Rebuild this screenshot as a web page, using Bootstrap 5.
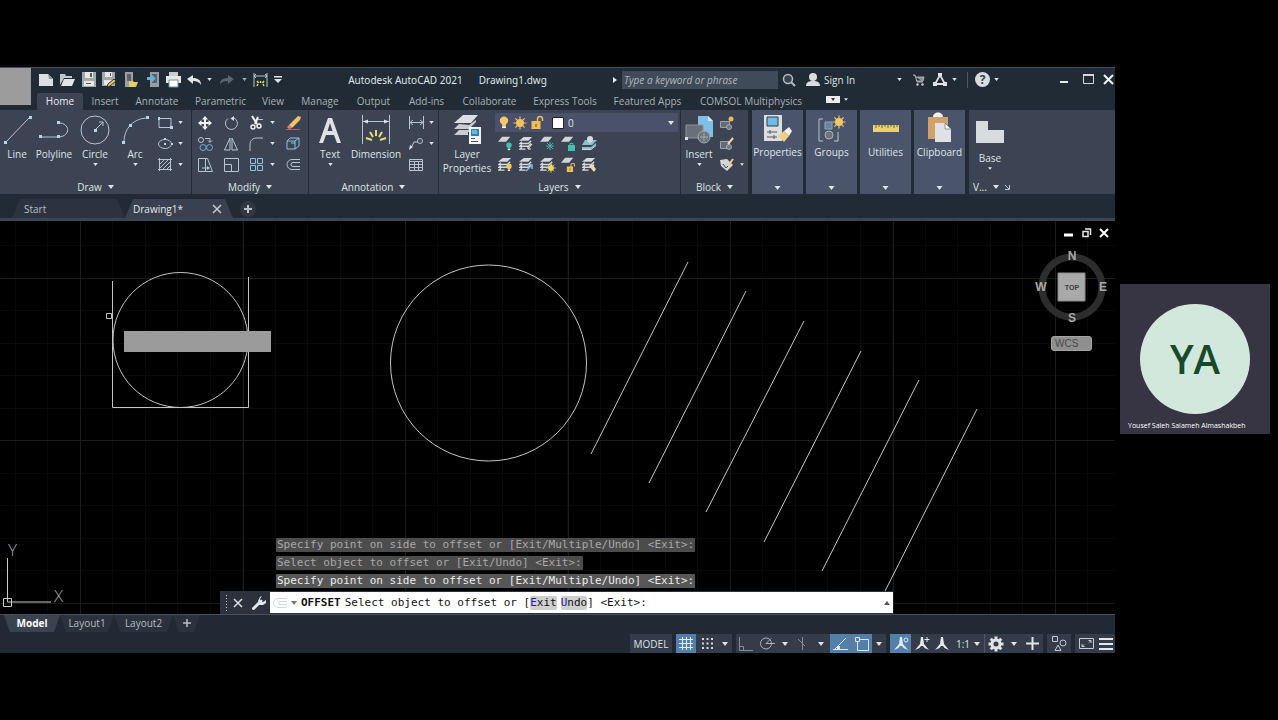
<!DOCTYPE html>
<html lang="en">
<head>
<meta charset="utf-8">
<meta name="viewport" content="width=device-width, initial-scale=1">
<title>Autodesk AutoCAD 2021 - Drawing1.dwg</title>
<link href="https://cdn.jsdelivr.net/npm/bootstrap@5.3.0/dist/css/bootstrap.min.css" rel="stylesheet">
<style>
:root{--bar:#202b35;--panel:#3c4352;--tile:#4a546b;--ink:#dfe4e8;--dim:#a9b0b6}
body{background:#000;color:var(--ink);font:10px/14px "Open Sans","Noto Sans",sans-serif}
button,input,select{font:inherit;color:inherit;background:none;border:0;padding:0;margin:0}
button{display:flex;align-items:center;justify-content:center;flex:none}
svg{display:block;flex:none;overflow:visible}
.stage{min-height:100vh}
.app{padding:67px 0;min-width:0}
.side{width:163px;padding:0 8px 3px 5px}
.ln{fill:none;stroke:#b4c6d2;stroke-width:1}
.titlebar{height:24px;background:var(--bar);border-top:1px solid #23566a;position:relative}
.titlebar .vr{height:16px;align-self:center}
.logo{width:31px;height:37px;background:#9c9c9c;position:absolute;left:0;top:0;z-index:2}
.quick{padding-left:36px}
.w9{width:9px}.w14{width:14px}.w18{width:18px}.w20{width:20px}.w21{width:21px}.w22{width:22px}.w24{width:24px}.w26{width:26px}
.caption-text{font-family:"Noto Sans","Open Sans",sans-serif}
.search{width:156px;height:18px;background:#404b58;padding:0 2px;font-style:italic;margin-left:3px}
.search::placeholder{color:#b0b7bd;opacity:1}
.signin{width:91px;padding-left:2px;gap:4px;justify-content:flex-start}
.tabs{height:19px;padding:2px 0 0 37px;background:var(--bar);display:grid;grid-template-columns:46px 44px 60px 67px 38px 56px 51px 55px 71px 80px 85px 122px 50px}
.tabs button{color:var(--dim);white-space:nowrap;padding-bottom:2px}
.tabs .on{background:var(--panel);color:#e8ecef;border-radius:2px 2px 0 0}
.ribbon{height:84px;background:var(--bar)}
.panel{background:var(--panel);border-right:1px solid #252d38;flex:none}
.panel-body{height:70px;padding-top:2px}
.panel-name{height:14px;gap:6px}
.big{flex-direction:column;justify-content:flex-start;height:68px}
.pic{height:35px;display:flex;align-items:center;justify-content:center}
.big .drop{margin-top:2px}
.base-view span+span{margin-top:2px}
.smalls{display:grid;grid-auto-rows:21px;align-content:start}
.smalls>div{display:flex;align-items:center}
.tile{background:var(--tile);width:51px;margin-left:3px;flex-direction:column;justify-content:flex-start}
.tile .drop{margin-top:auto;margin-bottom:4px}
.layer-combo{height:19px;background:#49526a;padding-left:4px;gap:4px;margin:1px 2px 1px 0}
.layer-combo select{appearance:none;outline:0;height:18px}
.filetabs{height:27px;background:var(--bar);border-bottom:3px solid #3b4553;padding:5px 0 0 12px}
.filetab{height:19px;background:#2b3340;color:#b6bdc3;clip-path:polygon(8px 0,calc(100% - 8px) 0,100% 100%,0 100%)}
.filetab.on{background:#394150;color:#e1e5e8}
.canvas{position:relative;background:#000;min-height:380px;overflow:hidden}
.canvas>.drawing{position:absolute;inset:0;width:100%;height:100%}
.redact{position:absolute;left:124px;top:110px;width:147px;height:21px;background:#9b9b9b}
.childwin{position:absolute;right:2px;top:3px}
.childwin button{width:18px;height:17px}
.cube{position:absolute;right:5px;top:28px}
.wcs{position:absolute;right:23px;top:115px;width:41px;height:15px;background:#8f8f8f;border:1px solid #a5a5a5;border-radius:3px;color:#4a4a4a;font:10px "Liberation Sans",Arial,sans-serif;justify-content:flex-start;padding-left:3px}
.command{position:absolute;left:220px;bottom:0;width:673px;max-width:100%;font:11px/14px "DejaVu Sans Mono","Liberation Mono",monospace}
.history{padding:0 0 3px 56px;gap:4px}
.history div{background:#4c4c4c;color:#a8a8a8;padding:0 1px;border-radius:1px;white-space:nowrap}
.history div:last-child{color:#ececec;background:#575757}
.cmdbar{height:23px;background:#2b313d}
.prompt{background:#fff;color:#111;height:21px;padding:0 3px;white-space:pre}
.prompt button{background:#cfcfcf;border-radius:2px;height:14px}
.prompt b.key{color:#2418b0;font-weight:400}
.layouts{height:20px;background:#212a34;border-top:1px solid #4a4f57;padding-left:4px}
.layouts button{height:17px;padding-bottom:1px;color:#b4bbc0;background:#2a323d;clip-path:polygon(0 0,100% 0,calc(100% - 6px) 100%,6px 100%)}
.layouts .on{background:#3b4350;color:#fff;font-weight:700}
.status{height:19px;background:#212a34}
.status button{height:19px;background:#343b49}
.status .lit{background:#5380aa}
.avatar-card{height:150px;background:#373544;position:relative}
.avatar{width:110px;height:110px;border-radius:50%;background:#d3e8dc;color:#174a2a;font:600 40px/109px "Open Sans",sans-serif;margin-top:20px}
.who{font-size:7px;line-height:10px;color:#fff;position:absolute;left:8px;bottom:3px;white-space:nowrap}
</style>
</head>
<body>
<svg width="0" height="0" class="position-absolute" aria-hidden="true">
  <symbol id="dn" viewBox="0 0 6 4"><path d="M0 0h6L3 4z" fill="#dfe4e8"/></symbol>
  <symbol id="stack" viewBox="0 0 16 16"><path d="M5 1h9l-4 4H0z" fill="#d5d9dc"/><path d="M3 6L1 8h9l3-3M3 9l-2 2h9l3-3M3 12l-2 2h6" fill="none" stroke="#d5d9dc" stroke-width="1.500"/></symbol>
  <symbol id="sheet" viewBox="0 0 16 16"><path d="M5 1h10l-5 6H0z" fill="#cfd4d8"/></symbol>
  <symbol id="bulb" viewBox="0 0 10 14"><circle cx="5" cy="5" r="4.500"/><path d="M3 8h4v3H3z"/><path d="M3 11h4v2H3z" fill="#fff"/></symbol>
  <symbol id="sun" viewBox="-8 -8 16 16"><circle r="4.500"/><path d="M0-7.500V7.500M-7.500 0H7.500M-5.300-5.300L5.300 5.300M5.300-5.300L-5.300 5.300" stroke="currentColor" stroke-width="1.300"/></symbol>
  <symbol id="lock" viewBox="0 0 12 13"><path d="M0 5h9v8H0z"/><path d="M6 6V3a2.500 2.500 0 0 1 5 0v2" fill="none" stroke="currentColor" stroke-width="1.500"/><path d="M4 8h1v3H4z" fill="#5a4a20"/></symbol>
  <symbol id="scale" viewBox="0 0 16 16"><path d="M7 1h2l1 7 5 6-4.500-2L9 10H7l-1.500 2L1 14l5-6z" fill="#e4e8ea"/></symbol>
</svg>

<div class="stage d-flex">
<main class="app flex-grow-1 d-flex flex-column">

  <header class="titlebar d-flex align-items-center">
    <div class="logo"></div>
    <nav class="quick d-flex" aria-label="Quick access">
      <button class="w21" aria-label="New"><svg width="15" height="13"><path d="M0 1h9l5 5v7H0z" fill="#dde0e2"/><path d="M9 1l5 5h-4z" fill="#8f979d"/></svg></button>
      <button class="w21" aria-label="Open"><svg width="15" height="13"><path d="M0 12V1h5l1 2h6v2H4z" fill="#c2c7cb"/><path d="M4 6h11l-3 7H1z" fill="#e2e5e7"/></svg></button>
      <button class="w21" aria-label="Save"><svg width="14" height="15"><path d="M0 0h14v15H0z" fill="#a3a9ad"/><path d="M3 0h8v6H3zM2 9h10v5H2z" fill="#e6e8ea"/><path d="M8 1h2v4H8zM4 11h5v1H4z" fill="#555d64"/></svg></button>
      <button class="w21" aria-label="Save as"><svg width="15" height="15"><path d="M0 0h13v14H0z" fill="#a3a9ad"/><path d="M3 0h7v5H3zM2 8h9v5H2z" fill="#e6e8ea"/><path d="M8 1h1v3H8z" fill="#555d64"/><path d="M6 12l6-5 2 2-6 5-3 1z" fill="#e6c65c" stroke="#333"/></svg></button>
      <button class="w22" aria-label="Open from web"><svg width="13" height="15"><path d="M0 0h8v15H0z" fill="#9aa1a6"/><path d="M2 2h4v7H2z" fill="#59616a"/><path d="M4 9h4l1 1h4l-2 5H4z" fill="#e3cf62"/></svg></button>
      <button class="w21" aria-label="Save to web"><svg width="12" height="15"><path d="M3 0h9v15H3z" fill="#969da3"/><path d="M5 2h5v9H5z" fill="#59616a"/><path d="M0 5h5V3l4 3.500L5 10V8H0z" fill="#62b3dc"/></svg></button>
      <button class="w21" aria-label="Plot"><svg width="15" height="15"><path d="M3 0h9v5H3z" fill="#c9cdd0"/><path d="M0 4h15v7H0z" fill="#e5e7e9"/><path d="M3 8h9v7H3z" fill="#fff" stroke="#6a8fa8"/></svg></button>
      <button class="w21" aria-label="Undo"><svg width="15" height="10"><path d="M0 4l6-4v3c5 0 8 2 8 7-2-3-4-4-8-4v3z" fill="#e2e5e7"/></svg></button>
      <button class="w9" aria-label="Undo list"><svg width="5" height="3"><use href="#dn"/></svg></button>
      <button class="w26" aria-label="Redo"><svg width="15" height="9"><path d="M14 4L8 0v3C3 3 0 5 0 9c2-2 4-3 8-3v3z" fill="#5a636b"/></svg></button>
      <button class="w9" aria-label="Redo list"><svg width="5" height="3"><use href="#dn" opacity=".7"/></svg></button>
      <button class="w22" aria-label="Dimension"><svg width="15" height="14"><path d="M1 0v14M14 0v14M1 3h13M3 1L1 3l2 2M12 1l2 2-2 2" class="ln"/><path d="M4 13l1-2M7.500 8v2M11 13l-1-2M4 8l1.500 2M11 8l-1.500 2" stroke="#e6dc62" stroke-width="1.500"/></svg></button>
      <button class="w14" aria-label="Customize"><svg width="8" height="7"><path d="M0 0h8v1.500H0zM0 3h8L4 7z" fill="#dfe4e8"/></svg></button>
    </nav>
    <div class="caption-text flex-grow-1 d-flex justify-content-center gap-3 text-nowrap"><span>Autodesk AutoCAD 2021</span><span>Drawing1.dwg</span></div>
    <button class="w9" aria-label="Toggle search"><svg width="4" height="6"><path d="M0 0l4 3-4 3z" fill="#e8eaec"/></svg></button>
    <input class="search" type="text" placeholder="Type a keyword or phrase" aria-label="Search">
    <button class="w22" aria-label="Find"><svg width="14" height="14"><circle cx="6" cy="6" r="4.500" fill="#37444f" stroke="#b5bcc1" stroke-width="1.500"/><path d="M9 9l4 4" stroke="#b5bcc1" stroke-width="2"/></svg></button>
    <button class="signin ms-1"><svg width="14" height="13"><circle cx="7" cy="4" r="4" fill="#d9dde0"/><path d="M0 13c0-4 3-5 7-5s7 1 7 5z" fill="#d9dde0"/></svg><span>Sign In</span></button>
    <button class="w9" aria-label="Account list"><svg width="5" height="3"><use href="#dn"/></svg></button>
    <button class="w22 ms-1" aria-label="Store"><svg width="12" height="12"><path d="M0 1h2l2 7h6M3 3h8l-1 4H4" fill="#8a9299" stroke="#aab1b7"/><circle cx="4.500" cy="10.500" r="1.200" fill="#c9ced2"/><circle cx="9.500" cy="10.500" r="1.200" fill="#c9ced2"/></svg></button>
    <button class="w20" aria-label="Autodesk app store"><svg width="14" height="13"><path d="M7 2l5 9H2z" fill="none" stroke="#dfe3e6" stroke-width="1.800"/><path d="M5 0h4v3H5zM0 9h4v4H0zM10 9h4v4h-4z" fill="#dfe3e6"/></svg></button>
    <button class="w9" aria-label="Apps list"><svg width="5" height="3"><use href="#dn"/></svg></button>
    <div class="vr ms-2 me-1"></div>
    <button class="w20" aria-label="Help"><svg width="15" height="15"><circle cx="7.500" cy="7.500" r="7.500" fill="#d8dcdf"/><text x="7.500" y="12" text-anchor="middle" font-size="12" font-weight="700" fill="#36424d">?</text></svg></button>
    <button class="w9" aria-label="Help list"><svg width="5" height="3"><use href="#dn"/></svg></button>
    <div class="d-flex ms-5 ps-1">
      <button class="w22" aria-label="Minimize"><svg width="8" height="9"><path d="M0 7h8" stroke="#e8eaec" stroke-width="2"/></svg></button>
      <button class="w26" aria-label="Maximize"><svg width="11" height="11"><path d="M.5.5h10v9H.5z" fill="none" stroke="#d4d8db"/><path d="M0 1h11" stroke="#d4d8db" stroke-width="2"/></svg></button>
      <button class="w14" aria-label="Close"><svg width="9" height="9"><path d="M0 0l9 9M9 0L0 9" stroke="#f0f2f3" stroke-width="2"/></svg></button>
    </div>
  </header>

  <nav class="tabs" aria-label="Ribbon tabs">
    <button class="on">Home</button><button>Insert</button><button>Annotate</button><button>Parametric</button><button>View</button><button>Manage</button><button>Output</button><button>Add-ins</button><button>Collaborate</button><button>Express Tools</button><button>Featured Apps</button><button>COMSOL Multiphysics</button>
    <button class="gap-1 pb-1" aria-label="Ribbon display"><svg width="14" height="7"><path d="M0 0h14v7H0z" fill="#eceeef"/><path d="M5 2h4L7 5z" fill="#333"/></svg><svg width="4" height="3"><use href="#dn"/></svg></button>
  </nav>

  <div class="ribbon d-flex">
    <section class="panel">
      <div class="panel-body d-flex">
        <button class="big" style="width:34px"><span class="pic"><svg width="30" height="28"><path d="M3 27L28 1" class="ln"/><path d="M2 25h3v3H2zM27 0h3v3h-3z" fill="#b9d4e4"/></svg></span><span>Line</span></button>
        <button class="big" style="width:40px"><span class="pic"><svg width="30" height="18"><path d="M1 16h19c12-1 11-14 0-14" class="ln"/><path d="M0 14h3v3H0zM18 14h3v3h-3zM18 0h3v3h-3z" fill="#b9d4e4"/></svg></span><span>Polyline</span></button>
        <button class="big" style="width:42px"><span class="pic"><svg width="30" height="30"><circle cx="15" cy="15" r="14" class="ln"/><path d="M15 15l8-8M19 7h4v4" class="ln"/><path d="M14 14h3v3h-3z" fill="#b9d4e4"/></svg></span><span>Circle</span><svg class="drop" width="5" height="3"><use href="#dn"/></svg></button>
        <button class="big" style="width:38px"><span class="pic"><svg width="27" height="28"><path d="M2 26C2 12 12 2 26 2" class="ln"/><path d="M0 25h3v3H0zM7 8h3v3H7zM24 0h3v3h-3z" fill="#b9d4e4"/></svg></span><span>Arc</span><svg class="drop" width="5" height="3"><use href="#dn"/></svg></button>
        <div class="smalls" style="width:37px">
          <div><button class="w22" aria-label="Rectangle"><svg width="15" height="12"><path d="M1 1.500h12v9H1z" class="ln"/><path d="M0 0h2v3H0zM12 9h3v3h-3z" fill="#b9d4e4"/></svg></button><button class="w9" aria-label="More"><svg width="5" height="3"><use href="#dn"/></svg></button></div>
          <div><button class="w22" aria-label="Ellipse"><svg width="15" height="12"><ellipse cx="7" cy="6" rx="6.500" ry="4.500" class="ln"/><path d="M6 5h2v2H6zM6 0h2v2H6zM13 5h2v2h-2z" fill="#b9d4e4"/></svg></button><button class="w9" aria-label="More"><svg width="5" height="3"><use href="#dn"/></svg></button></div>
          <div><button class="w22" aria-label="Hatch"><svg width="14" height="13"><path d="M0 1.500h14M0 11.500h14M1.500 0v13M12.500 0v13M2 6l4-4M2 10l8-8M5 11l7-7M9 11l3-3" class="ln"/></svg></button><button class="w9" aria-label="More"><svg width="5" height="3"><use href="#dn"/></svg></button></div>
        </div>
      </div>
      <div class="panel-name d-flex justify-content-center align-items-center">Draw <svg width="6" height="4"><use href="#dn"/></svg></div>
    </section>

    <section class="panel">
      <div class="panel-body smalls" style="grid-template-columns:26px 26px 36px 28px">
        <div><button class="mx-auto" aria-label="Move"><svg width="14" height="14"><path d="M7 0l3 3.500H8V6h2.500V4L14 7l-3.500 3V8H8v2.500h2L7 14l-3-3.500h2V8H3.500v2L0 7l3.500-3v2H6V3.500H4z" fill="#f0f3f5"/></svg></button></div>
        <div><button class="mx-auto" aria-label="Rotate"><svg width="14" height="14"><path d="M10 2A6 6 0 1 1 4 2.500" class="ln"/><path d="M10 0v5L6.500 2.500z" fill="#d5e0e8"/></svg></button></div>
        <div><button class="w24" aria-label="Trim"><svg width="13" height="14"><path d="M2 0l5 8M8 1L5 8" stroke="#f0f3f5" stroke-width="2"/><circle cx="3" cy="11" r="2" fill="none" stroke="#f0f3f5" stroke-width="1.500"/><circle cx="9" cy="10" r="2" fill="none" stroke="#f0f3f5" stroke-width="1.500"/><path d="M8 3.500h5" class="ln"/></svg></button><button class="w9" aria-label="More"><svg width="5" height="3"><use href="#dn"/></svg></button></div>
        <div><button class="w26" aria-label="Erase"><svg width="15" height="14"><path d="M3 9l9-9 3 1-1 3-8 8z" fill="#eec36a"/><path d="M3 9l3 3-3 1-2-2z" fill="#e27f86"/><path d="M0 13.500h14" stroke="#b05f6b"/></svg></button></div>
        <div><button class="mx-auto" aria-label="Copy"><svg width="15" height="14"><circle cx="3" cy="3" r="2.500" class="ln"/><circle cx="5" cy="10.500" r="3" class="ln" style="stroke:#6fb0da"/><circle cx="11.500" cy="10.500" r="3" class="ln" style="stroke:#6fb0da"/><path d="M7 1.500h5V5M10 3.500l2 2 2-2" class="ln"/></svg></button></div>
        <div><button class="mx-auto" aria-label="Mirror"><svg width="14" height="14"><path d="M6 1v12H.5zM8 1v12h5.500z" class="ln"/></svg></button></div>
        <div><button class="w24" aria-label="Fillet"><svg width="14" height="14"><path d="M1 14V8c0-5 3-7 7-7h6" class="ln"/></svg></button><button class="w9" aria-label="More"><svg width="5" height="3"><use href="#dn"/></svg></button></div>
        <div><button class="w26" aria-label="Explode"><svg width="14" height="13"><path d="M1 4h8v8H1zM1 4l3-3h9v8l-4 3M9 4l4-3M5 6h4" class="ln" style="stroke:#8fc0de"/></svg></button></div>
        <div><button class="mx-auto" aria-label="Stretch"><svg width="15" height="14"><path d="M.5.5h7v13h-7zM7.500.5h2l5 13h-7M4 10h6" class="ln"/><path d="M9 8l3 2-3 2z" fill="#b4c6d2"/></svg></button></div>
        <div><button class="mx-auto" aria-label="Scale"><svg width="15" height="14"><path d="M.5.500h14v13H.5zM.5 6.500h7v7" class="ln"/></svg></button></div>
        <div><button class="w24" aria-label="Array"><svg width="13" height="13"><path d="M.5.5h5v5h-5zM7.500.5h5v5h-5zM.5 7.500h5v5h-5zM7.500 7.500h5v5h-5z" class="ln" style="stroke:#8fc0de"/></svg></button><button class="w9" aria-label="More"><svg width="5" height="3"><use href="#dn"/></svg></button></div>
        <div><button class="w26" aria-label="Offset"><svg width="14" height="11"><path d="M14 .5H6a5 5 0 0 0 0 10h8M14 3.500H7a2 2 0 0 0 0 4h7" class="ln"/></svg></button></div>
      </div>
      <div class="panel-name d-flex justify-content-center align-items-center">Modify <svg width="6" height="4"><use href="#dn"/></svg></div>
    </section>

    <section class="panel">
      <div class="panel-body d-flex ps-1">
        <button class="big" style="width:34px"><span class="pic"><svg width="24" height="26"><path d="M1 26L10 1h4l9 25h-4l-3-8H8l-3 8zM9.500 14h5L12 6z" fill="#dfe2e4" fill-rule="evenodd"/></svg></span><span>Text</span><svg class="drop" width="5" height="3"><use href="#dn"/></svg></button>
        <button class="big" style="width:58px"><span class="pic"><svg width="28" height="29"><path d="M.5 0v29M27.500 0v29M1 6.500h26" class="ln"/><path d="M1 6.500l5-2v4zM27 6.500l-5-2v4z" fill="#dbe3e8"/><path d="M14 15v6M8 17l3 5M20 17l-3 5M4 23l6 2M24 23l-6 2" stroke="#e8df72" stroke-width="2"/></svg></span><span>Dimension</span></button>
        <div class="smalls" style="width:33px">
          <div><button class="w22" aria-label="Linear"><svg width="15" height="13"><path d="M.5 0v13M14.500 0v13M1 6.500h13M4 4L1 6.500 4 9M11 4l3 2.500L11 9" class="ln"/></svg></button><button class="w9" aria-label="More"><svg width="5" height="3"><use href="#dn"/></svg></button></div>
          <div><button class="w22" aria-label="Leader"><svg width="14" height="12"><path d="M2 10l3-6h4" class="ln"/><circle cx="11" cy="3" r="2.500" class="ln"/><path d="M0 12l1-5 3 2z" fill="#dbe3e8"/></svg></button><button class="w9" aria-label="More"><svg width="5" height="3"><use href="#dn"/></svg></button></div>
          <div><button class="w22" aria-label="Table"><svg width="14" height="12"><path d="M.5.5h13v11H.5zM0 2.500h14M1 5.500h13M1 8.500h13M5.500 3v9M9.500 3v9" class="ln"/></svg></button></div>
        </div>
      </div>
      <div class="panel-name d-flex justify-content-center align-items-center">Annotation <svg width="6" height="4"><use href="#dn"/></svg></div>
    </section>

    <section class="panel" style="width:242px">
      <div class="panel-body d-flex">
        <button class="big" style="width:56px"><span class="pic"><svg width="29" height="29"><path d="M10 0h15l-7 8H1z" fill="#dcdfe1"/><path d="M6 9l-5 5h15l7-7v-2l-7 5zM6 15l-5 5h14v-3h3v-5l-3 3z" fill="#c9cdd1"/><path d="M16 12h12v17H16z" fill="#f1f3f4"/><path d="M18 14h8v7h-8z" fill="#2f83ad"/><path d="M19 15h5v4h-5z" fill="#6cb8dc"/><path d="M18 23h4v1h-4zM18 26h7v1h-7z" fill="#555"/></svg></span><span>Layer<br>Properties</span></button>
        <div class="flex-grow-1">
          <div class="layer-combo d-flex align-items-center">
            <svg width="10" height="13" fill="#f5c766"><use href="#bulb"/></svg>
            <svg width="14" height="14" fill="#f3c25c" color="#f3c25c"><use href="#sun"/></svg>
            <svg width="13" height="13" fill="#f2bd55" color="#f2bd55"><use href="#lock"/></svg>
            <svg class="ms-1" width="12" height="12"><path d="M.5.5h11v11H.5z" fill="#fff" stroke="#222"/></svg>
            <select class="flex-grow-1" aria-label="Layer"><option>0</option></select>
            <svg class="me-1" width="6" height="4"><use href="#dn"/></svg>
          </div>
          <div class="smalls" style="grid-template-columns:repeat(5,21px)">
            <button aria-label="Layer off"><svg width="15" height="15"><use href="#sheet" width="13" height="13"/><g fill="#3fc3ae"><use href="#bulb" x="8" y="6" width="6" height="9"/></g></svg></button>
            <button aria-label="Isolate"><svg width="15" height="15"><use href="#stack"/><path d="M13 8l-4 5M9 10v3h3" stroke="#eee" fill="none"/></svg></button>
            <button aria-label="Freeze"><svg width="15" height="15"><use href="#sheet" width="13" height="13"/><g stroke="#45b5b0"><path d="M10 6v8M6 10h8M7 7l6 6M13 7l-6 6"/></g></svg></button>
            <button aria-label="Lock"><svg width="15" height="15"><use href="#sheet" width="13" height="13"/><path d="M7 9h7v6H7z" fill="#3fc3ae"/><path d="M9 9V7.500h3V9" fill="none" stroke="#3fc3ae"/></svg></button>
            <button aria-label="Make current"><svg width="15" height="15"><path d="M3 4h12l-5 5H0zM0 11h9l5-4v2l-5 4H0z" fill="#86c3cf"/><path d="M0 13.500h9l5-4" stroke="#d7dade" fill="none"/><circle cx="8" cy="3" r="3" fill="#d7dade"/><path d="M6 5h4L8 8z" fill="#d7dade"/></svg></button>
            <button aria-label="All on"><svg width="15" height="15"><use href="#stack"/><g fill="#f0c75f"><use href="#bulb" x="8" y="6" width="6" height="9"/></g></svg></button>
            <button aria-label="Unisolate"><svg width="15" height="15"><use href="#stack"/><path d="M7 14l6-6M9 8h4v4" stroke="#7db9e0" stroke-width="1.500" fill="none"/></svg></button>
            <button aria-label="Thaw"><svg width="15" height="15"><use href="#stack"/><g fill="#e7dc57" color="#e7dc57"><use href="#sun" x="6" y="6" width="10" height="10"/></g></svg></button>
            <button aria-label="Unlock"><svg width="15" height="15"><use href="#sheet" width="13" height="13"/><g fill="#f0c060" color="#f0c060"><use href="#lock" x="5" y="6" width="10" height="9"/></g></svg></button>
            <button aria-label="Match layer"><svg width="15" height="15"><use href="#stack"/><path d="M7 9l3-2 4 5-2 3z" fill="#eddcae"/></svg></button>
          </div>
        </div>
      </div>
      <div class="panel-name d-flex justify-content-center align-items-center">Layers <svg width="6" height="4"><use href="#dn"/></svg></div>
    </section>

    <section class="panel" style="width:68px">
      <div class="panel-body d-flex">
        <button class="big" style="width:36px"><span class="pic"><svg width="29" height="29"><path d="M13 1h10l5 5v16H13z" fill="#7fc0e8"/><path d="M23 1l5 5h-5z" fill="#d3ebf8"/><path d="M1 10h17v13H1z" fill="#6a7078" stroke="#8d939a"/><circle cx="19" cy="22" r="6" fill="#6f767e" stroke="#a5abb1"/><path d="M19 18v8M15 22h8" stroke="#a5abb1"/><path d="M0 22h3v3H0z" fill="#ddd"/></svg></span><span>Insert</span><svg class="drop" width="5" height="3"><use href="#dn"/></svg></button>
        <div class="smalls" style="width:30px">
          <div><button class="w20" aria-label="Create block"><svg width="14" height="14"><path d="M.5 5.500h9v6h-9z" fill="#646b74" stroke="#9ba2a9"/><circle cx="9" cy="11" r="2.500" fill="#6f767e" stroke="#a5abb1"/><circle cx="11" cy="3" r="2.500" fill="#eeb65c"/></svg></button></div>
          <div><button class="w20" aria-label="Edit block"><svg width="14" height="14"><path d="M.5 4.500h9v7h-9z" fill="#646b74" stroke="#9ba2a9"/><circle cx="9" cy="10" r="2.500" fill="#6f767e" stroke="#a5abb1"/><path d="M8 7l5-6" stroke="#efd9a8" stroke-width="2"/></svg></button></div>
          <div><button class="w20" aria-label="Edit attributes"><svg width="14" height="14"><path d="M0 2l7-1 6 6-6 6-6-5z" fill="#d3d7da"/><path d="M8 8l5-7" stroke="#eecf7d" stroke-width="2"/><path d="M3 6l3 4 2-2" stroke="#444" fill="none"/></svg></button><button class="w9" aria-label="More"><svg width="4" height="3"><use href="#dn"/></svg></button></div>
        </div>
      </div>
      <div class="panel-name d-flex justify-content-center align-items-center">Block <svg width="6" height="4"><use href="#dn"/></svg></div>
    </section>

    <button class="tile h-100"><span class="pic"><svg width="28" height="28"><path d="M0 1h18v26H0z" fill="#dcdfe1"/><path d="M3 3h11v9H3z" fill="#6fbbe6" stroke="#333c46"/><path d="M3 18h10M6 16v4M3 23h10M10 21v4" stroke="#555"/><path d="M14 22l6-5 5 5-5 6z" fill="#eed07e"/><path d="M20 17l5-4 3 4-3 5z" fill="#f3f4f5"/></svg></span><span>Properties</span><svg class="drop" width="7" height="4"><use href="#dn"/></svg></button>
    <button class="tile h-100"><span class="pic"><svg width="28" height="28"><path d="M5 5H1v22h4M16 27h4V18" fill="none" stroke="#b4c6d2"/><path d="M7 8h7v7H7z" fill="#68809a" stroke="#8aa7bf"/><circle cx="11" cy="21" r="4" fill="#6d747d" stroke="#aab1b8"/><g fill="#f5c865" color="#f5c865"><use href="#sun" x="14" y="0" width="14" height="16"/></g></svg></span><span>Groups</span><svg class="drop" width="7" height="4"><use href="#dn"/></svg></button>
    <button class="tile h-100"><span class="pic"><svg width="26" height="8"><path d="M0 1h26v7H0z" fill="#ecd173"/><path d="M3 1v3M6 1v2M9 1v3M12 1v2M15 1v3M18 1v2M21 1v3M24 1v2" stroke="#71602e"/></svg></span><span>Utilities</span><svg class="drop" width="7" height="4"><use href="#dn"/></svg></button>
    <button class="tile h-100"><span class="pic"><svg width="24" height="29"><path d="M0 4h20v22H0z" fill="#d3a26a"/><path d="M5 4c0-6 10-6 10 0z" fill="#f5f6f6"/><path d="M7 10h10l6 6v13H7z" fill="#dfe2e5"/><path d="M17 10l6 6h-6z" fill="#fff" stroke="#8d949a"/></svg></span><span>Clipboard</span><svg class="drop" width="7" height="4"><use href="#dn"/></svg></button>

    <section class="panel ms-1 flex-grow-1 border-0">
      <div class="panel-body pt-1">
        <button class="big base-view" style="width:42px"><span class="pic"><svg width="28" height="22"><path d="M0 0h12v9h16v13H0z" fill="#d9dcde"/></svg></span><span>Base</span><svg class="drop" width="4" height="3"><use href="#dn"/></svg></button>
      </div>
      <div class="panel-name d-flex align-items-center ps-1"><span>V...</span><svg width="6" height="4"><use href="#dn"/></svg><svg width="5" height="5"><path d="M0 0l4 4M0 4.500h4.500V0" class="ln"/></svg></div>
    </section>
  </div>

  <div class="filetabs d-flex">
    <button class="filetab justify-content-start ps-2" style="width:113px"><span class="ps-1">Start</span></button>
    <button class="filetab on justify-content-between px-2" style="width:108px"><span>Drawing1*</span><svg class="me-1" width="8" height="8"><path d="M0 0l8 8M8 0L0 8" stroke="#c4cacf" stroke-width="1.500"/></svg></button>
    <button class="w22 ms-1" aria-label="New drawing"><svg width="18" height="16"><circle cx="9" cy="8" r="8" fill="#2f3844"/><path d="M5 8h8M9 4v8" stroke="#b9c0c5" stroke-width="2"/></svg></button>
  </div>

  <section class="canvas flex-grow-1">
    <svg class="drawing">
      <defs>
        <pattern id="minor" x="15" y="57" width="65" height="65" patternUnits="userSpaceOnUse"><path d="M.5 0v65M32.500 0v65M0 .5h65M0 32.500h65" stroke="#09090b"/></pattern>
        <pattern id="major" x="80" y="57" width="325" height="325" patternUnits="userSpaceOnUse"><path d="M.5 0v325M163.500 0v325M0 .5h325M0 162.500h325" stroke="#1a1b1d"/></pattern>
      </defs>
      <rect width="100%" height="100%" fill="url(#minor)"/>
      <rect width="100%" height="100%" fill="url(#major)"/>
      <g fill="none" stroke="#c4c4c4">
        <path d="M112.500 60v126.500h136V56"/>
        <circle cx="180.500" cy="119" r="67.500"/>
        <circle cx="488.500" cy="142" r="98"/>
        <path d="M688 41L591 233M746 70L649 262M804 100L706 291M861 130L764 321M919 159L822 350M977 188L880 380"/>
        <path d="M106.500 92.500h5v5h-5z"/>
      </g>
    </svg>
    <div class="redact"></div>
    <svg class="position-absolute start-0 bottom-0" width="70" height="76"><path d="M7.500 20v44H51M3.500 60.500h8v8h-8z" fill="none" stroke="#c9c9c9"/><g fill="#a8a8a8" font-size="17" font-weight="300"><text x="8" y="18">Y</text><text x="54" y="64">X</text></g></svg>
    <div class="childwin d-flex">
      <button aria-label="Minimize drawing"><svg width="9" height="8"><path d="M0 6h9" stroke="#fff" stroke-width="3"/></svg></button>
      <button aria-label="Restore drawing"><svg width="9" height="9"><path d="M3 1h5.500v6M1 3.500h5v5H1z" fill="none" stroke="#e8e8e8" stroke-width="1.500"/></svg></button>
      <button aria-label="Close drawing"><svg width="8" height="8"><path d="M0 0l8 8M8 0L0 8" stroke="#fff" stroke-width="2"/></svg></button>
    </div>
    <svg class="cube" width="76" height="76"><circle cx="38" cy="38" r="30" fill="none" stroke="#2d2d2d" stroke-width="7"/><path d="M24 24h27v28H24z" fill="#a9a9a9" stroke="#8c8c8c"/><g font-family="Liberation Sans,Arial,sans-serif" font-weight="700" font-size="12" fill="#a8a8a8" text-anchor="middle"><text x="38" y="11">N</text><text x="38" y="73">S</text><text x="7" y="42">W</text><text x="69" y="42">E</text><text x="38" y="41" font-size="7" fill="#3c3c3c">TOP</text></g></svg>
    <button class="wcs">WCS</button>

    <div class="command">
      <div class="history d-flex flex-column align-items-start">
        <div>Specify point on side to offset or [Exit/Multiple/Undo] &lt;Exit&gt;:</div>
        <div>Select object to offset or [Exit/Undo] &lt;Exit&gt;:</div>
        <div>Specify point on side to offset or [Exit/Multiple/Undo] &lt;Exit&gt;:</div>
      </div>
      <div class="cmdbar d-flex align-items-center">
        <svg class="ms-1" width="4" height="16"><path d="M2.500 0v16" stroke="#c9ced3" stroke-dasharray="1 2"/></svg>
        <button class="w20" aria-label="Close command line"><svg width="8" height="8"><path d="M0 0l8 8M8 0L0 8" stroke="#dfe2e5" stroke-width="1.500"/></svg></button>
        <button class="w22" aria-label="Customize command line"><svg width="14" height="14"><path d="M1.500 12.500L9 5" stroke="#e3e6e8" stroke-width="3" stroke-linecap="round"/><path d="M10 0L8 3v3h3l3-2v3l-3 2H7L6 5l2-4z" fill="#e3e6e8"/></svg></button>
        <div class="prompt flex-grow-1 d-flex align-items-center"><svg width="14" height="10"><path d="M14 .5H5a4 4 0 0 0 0 9h9M14 3.500H6v3h8" fill="none" stroke="#d6d9dc"/></svg><svg class="ms-1 me-1" width="6" height="4"><path d="M0 0h6L3 4z" fill="#777"/></svg><b>OFFSET</b><span class="ms-1">Select object to offset or [</span><button><b class="key">E</b>xit</button><button class="ms-1"><b class="key">U</b>ndo</button><span>] &lt;Exit&gt;:</span><input class="flex-grow-1" style="min-width:0" type="text" aria-label="Command"><svg width="6" height="4"><path d="M0 4h6L3 0z" fill="#555"/></svg></div>
      </div>
    </div>
  </section>

  <nav class="layouts d-flex" aria-label="Layouts">
    <button class="on" style="width:56px">Model</button><button style="width:54px">Layout1</button><button style="width:59px">Layout2</button><button style="width:27px" aria-label="New layout"><svg width="8" height="8"><path d="M0 4h8M4 0v8" stroke="#b9c0c5" stroke-width="1.500"/></svg></button>
  </nav>

  <footer class="status d-flex justify-content-end">
    <button style="width:42px" class="me-1">MODEL</button>
    <button class="w20 lit" aria-label="Grid"><svg width="14" height="13"><path d="M0 2.500h14M0 6.500h14M0 10.500h14M3.500 0v13M7.500 0v13M11.500 0v13" stroke="#e0ebf4"/></svg></button>
    <button class="w22" aria-label="Snap"><svg width="11" height="11"><path d="M1 0v11M5.500 0v11M10 0v11" stroke="#d5d9dc" stroke-width="2" stroke-dasharray="2 2.500"/></svg></button>
    <button class="w14 me-1" aria-label="Snap options"><svg width="6" height="4"><use href="#dn"/></svg></button>
    <button class="w20" aria-label="Ortho"><svg width="14" height="14"><path d="M.5 0v13.500H14M.5 9.500h4v4" fill="none" stroke="#858d96"/></svg></button>
    <button class="w22" aria-label="Polar"><svg width="15" height="13"><circle cx="6" cy="6.500" r="5.500" fill="none" stroke="#aab1b8"/><path d="M6 6.500h9M6 6.500l5-5" stroke="#aab1b8"/></svg></button>
    <button class="w14" aria-label="Polar options"><svg width="6" height="4"><use href="#dn"/></svg></button>
    <button class="w20" aria-label="Isometric"><svg width="8" height="13"><path d="M4.500 0v13M0 2l7 7" stroke="#858d96"/></svg></button>
    <button class="w18" aria-label="Isometric options"><svg width="6" height="4"><use href="#dn"/></svg></button>
    <button class="w21 lit" aria-label="Snap tracking"><svg width="15" height="14"><path d="M0 12.500h15M2 12L13 1" stroke="#dbe7f1"/><path d="M4 9h3v3H4z" fill="#dbe7f1"/></svg></button>
    <button class="w21 lit border-start border-secondary" aria-label="Object snap"><svg width="15" height="14"><path d="M2.500 2.500h11v11h-11z" fill="none" stroke="#dbe7f1"/><path d="M.5.5h4v4h-4z" fill="#5380aa" stroke="#dbe7f1"/></svg></button>
    <button class="w14 me-1" aria-label="Object snap options"><svg width="6" height="4"><use href="#dn"/></svg></button>
    <button class="w21 lit" aria-label="Annotation visibility"><svg width="16" height="16"><use href="#scale"/><circle cx="13" cy="4" r="2" fill="none" stroke="#dbe7f1"/></svg></button>
    <button class="w21" aria-label="Auto scale"><svg width="16" height="16"><use href="#scale"/><path d="M13 1v5M10.500 3.500h5" stroke="#dbe7f1"/></svg></button>
    <button class="w20" aria-label="Annotation scale"><svg width="16" height="16"><use href="#scale"/></svg></button>
    <button style="width:32px" class="gap-1">1:1 <svg width="6" height="4"><use href="#dn"/></svg></button>
    <div class="vr"></div>
    <button class="w22" aria-label="Workspace"><svg width="16" height="16" viewBox="-8 -8 16 16"><circle r="4" fill="none" stroke="#dfe3e6" stroke-width="3"/><path d="M0-7.500v3M0 7.500v-3M-7.500 0h3M7.500 0h-3M-5.300-5.300l2 2M5.300 5.300l-2-2M5.300-5.300l-2 2M-5.300 5.300l2-2" stroke="#dfe3e6" stroke-width="3"/></svg></button>
    <button class="w14" aria-label="Workspace options"><svg width="6" height="4"><use href="#dn"/></svg></button>
    <button class="w22" aria-label="Annotation monitor"><svg width="13" height="13"><path d="M0 6.500h13M6.500 0v13" stroke="#e3e6e8" stroke-width="2"/></svg></button>
    <button class="w24 mx-1" aria-label="Isolate objects"><svg width="15" height="15"><path d="M.5.5h5v5h-5zM3 14.500L6 9l3 5.500z" fill="none" stroke="#c2c8cd"/><circle cx="11" cy="7" r="3" fill="none" stroke="#c2c8cd"/></svg></button>
    <button class="w22" aria-label="Clean screen"><svg width="15" height="11"><path d="M.5.5h14v10H.5zM3 6v2.500h2.500M12 5V2.500H9.500M3 8.500l2-2M12 2.500l-2 2" fill="none" stroke="#c8cdd1"/></svg></button>
    <button class="w18" aria-label="Customization"><svg width="14" height="12"><path d="M0 1h14M0 6h14M0 11h14" stroke="#e6e9eb" stroke-width="2"/></svg></button>
  </footer>
</main>

<aside class="side d-flex flex-column justify-content-center flex-shrink-0">
  <div class="avatar-card d-flex flex-column align-items-center">
    <div class="avatar text-center">YA</div>
    <div class="who">Yousef Saleh Salameh Almashakbeh</div>
  </div>
</aside>
</div>
<script src="https://cdn.jsdelivr.net/npm/bootstrap@5.3.0/dist/js/bootstrap.bundle.min.js"></script>
</body>
</html>
